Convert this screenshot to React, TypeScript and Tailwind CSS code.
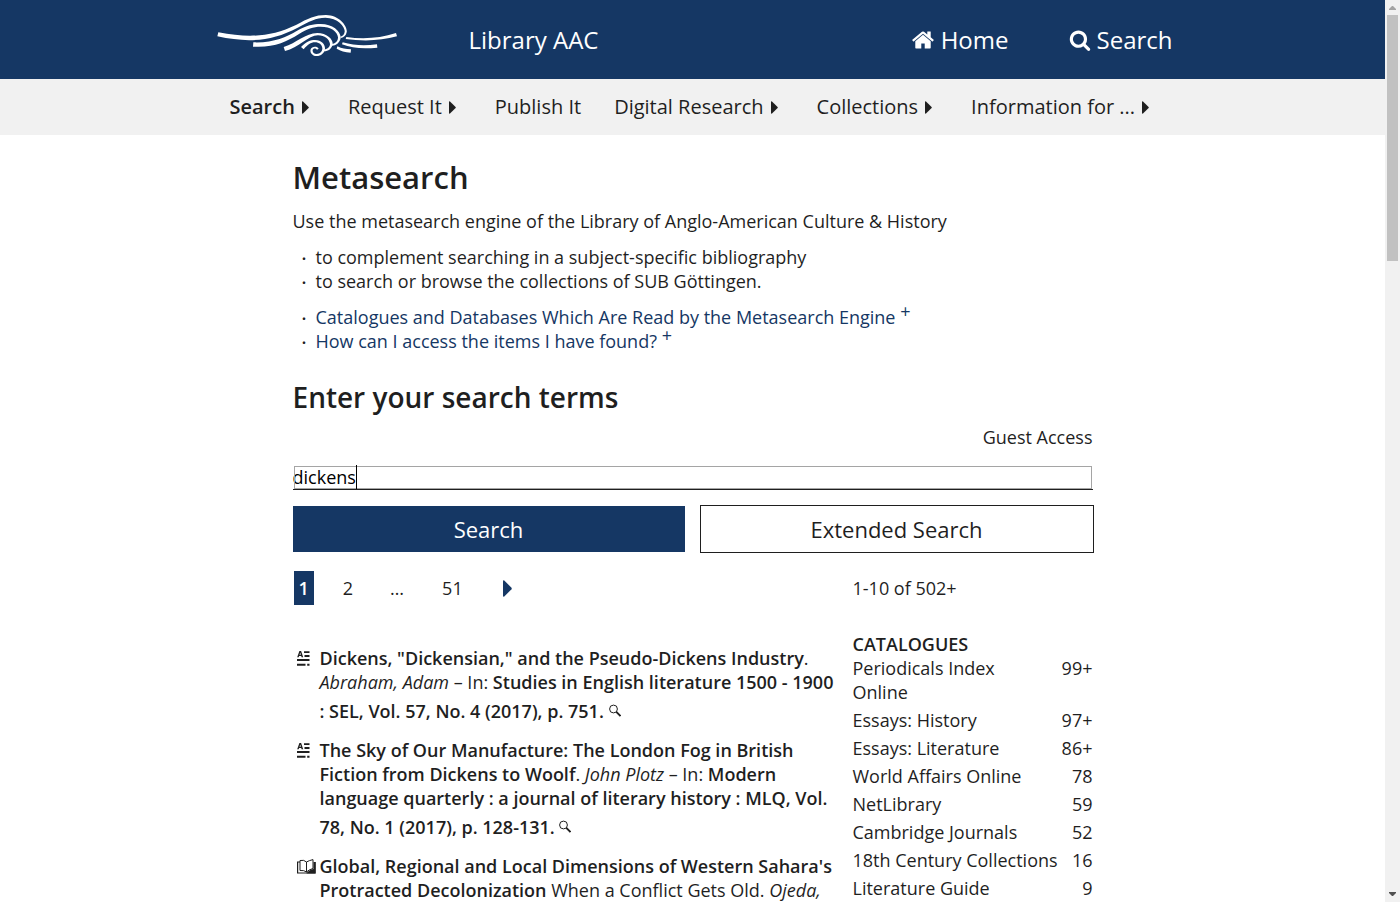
import React, { useState } from "react";

const navItems = [
  { label: "Search", menu: true, active: true },
  { label: "Request It", menu: true },
  { label: "Publish It", menu: false },
  { label: "Digital Research", menu: true },
  { label: "Collections", menu: true },
  { label: "Information for ...", menu: true },
];

const facets = [
  { name: "Periodicals Index Online", count: "99+" },
  { name: "Essays: History", count: "97+" },
  { name: "Essays: Literature", count: "86+" },
  { name: "World Affairs Online", count: "78" },
  { name: "NetLibrary", count: "59" },
  { name: "Cambridge Journals", count: "52" },
  { name: "18th Century Collections", count: "16" },
  { name: "Literature Guide", count: "9" },
];

function Logo() {
  return (
    <svg viewBox="51 46 540 123" className="h-[41px] w-[180px]" fill="#fff" aria-hidden="true">
      <path d="M55 98C150 116 215 111 288 76C325 56 345 46 378 46C420 47 444 82 440 98C438 108 432 113 423 115L421 111C429 109 433 104 434 96C436 84 415 54 376 54C347 54 329 65 293 84C215 125 145 130 52 110Z" />
      <path d="M160 128C220 130 258 113 290 94C320 77 340 73 362 73C398 73 423 95 422 115C419 130 406 139 395 138L395 133C408 132 414 123 414 113C412 95 393 81 362 81C340 81 321 88 297 103C258 127 220 145 159 141Z" />
      <path d="M251 142C290 130 316 100 352 100C380 100 399 118 398 133C396 147 385 155 372 155L372 150C384 148 390 140 390 133C388 119 374 107 354 107C325 107 295 145 255 154Z" />
      <path d="M303 142C318 126 331 121 345 121C366 121 376 136 375 148C373 161 363 169 350 169C336 169 329 157 332 149C335 140 351 138 356 147L351 150C347 144 339 146 338 151C337 158 342 163 350 163C360 163 367 156 367 146C366 135 357 128 345 128C332 128 323 135 311 149Z" />
      <path d="M439 112C490 119 540 116 588 100L591 110C542 124 488 125 437 118Z" />
      <path d="M428 128C462 138 495 139 531 134L532 144C490 148 456 146 426 134Z" />
      <path d="M412 140C426 147 437 149 453 149L452 159C434 158 422 154 410 147Z" />
    </svg>
  );
}

function HomeIcon() {
  return (
    <svg viewBox="0 0 1792 1792" className="size-6" fill="currentColor" aria-hidden="true">
      <path d="M1472 992v480q0 26-19 45t-45 19h-384v-384h-256v384h-384q-26 0-45-19t-19-45v-480q0-1 .5-3t.5-3l575-474 575 474q1 2 1 6zm223-69l-62 74q-8 9-21 11h-3q-13 0-21-7l-692-577-692 577q-12 8-24 7-13-2-21-11l-62-74q-8-10-7-23.5t11-21.5l719-599q32-26 76-26t76 26l244 204v-195q0-14 9-23t23-9h192q14 0 23 9t9 23v408l219 182q10 8 11 21.5t-7 23.5z" />
    </svg>
  );
}

function SearchIcon() {
  return (
    <svg viewBox="0 0 1792 1792" className="size-[22px]" fill="currentColor" aria-hidden="true">
      <path d="M1216 832q0-185-131.5-316.5t-316.5-131.5-316.5 131.5-131.5 316.5 131.5 316.5 316.5 131.5 316.5-131.5 131.5-316.5zm512 832q0 52-38 90t-90 38q-54 0-90-38l-343-342q-179 124-399 124-143 0-273.5-55.5t-225-150-150-225-55.5-273.5 55.5-273.5 150-225 225-150 273.5-55.5 273.5 55.5 225 150 150 225 55.5 273.5q0 220-124 399l343 343q37 37 37 90z" />
    </svg>
  );
}

function Caret({ className }: { className: string }) {
  return (
    <svg viewBox="0 0 7 13" preserveAspectRatio="none" className={className} fill="currentColor" aria-hidden="true">
      <path d="M0 1Q0 0 1 .4L6.6 6Q7 6.5 6.6 7L1 12.6Q0 13 0 12Z" />
    </svg>
  );
}

function ArticleIcon() {
  return (
    <svg viewBox="0 0 13 15" className="h-[15px] w-[13px]" fill="currentColor" aria-hidden="true">
      <path d="M2.4 0H4.1L6.2 6.3H4.6L4.2 5H2.1L1.7 6.3H.2ZM3.2 1.5 2.5 3.8H3.9Z" fillRule="evenodd" />
      <path d="M7 .2H12.5V2H7ZM7.5 4H12.5V6H7.5ZM0 8H12.5V10H0ZM0 12.8H8.5V14.8H0ZM10.2 12.8H12.5V14.8H10.2Z" />
    </svg>
  );
}

function BookIcon() {
  return (
    <svg viewBox="0 0 19 15" className="h-[15px] w-[19px]" fill="none" stroke="currentColor" aria-hidden="true">
      <path d="M3 1.5Q7 .5 9.5 3Q12 1.5 16 .6V9.5Q12 10.5 9.5 13Q7 11 3 11.5ZM9.5 3V13" />
      <path d="M3 3H.6V14H18V3" strokeWidth="1.2" />
      <path d="M16.5 3H18.6V14.5H9.5Q12 10.5 16.5 10Z" fill="currentColor" stroke="none" />
    </svg>
  );
}

function LookupLink() {
  return (
    <a href="#lookup" aria-label="Look up availability">
      <svg viewBox="0 0 12 24" className="inline-block h-6 w-3 align-baseline" fill="none" stroke="currentColor" aria-hidden="true">
        <circle cx="4.5" cy="15" r="3.9" strokeWidth="1" />
        <path d="M7.3 17.8 11.5 22" strokeWidth="1.9" />
      </svg>
    </a>
  );
}

function Result({ icon, children }: { icon: React.ReactNode; children: React.ReactNode }) {
  return (
    <li className="mb-[15px] flex">
      <span className="w-[27px] shrink-0 pt-[5px] pl-1">{icon}</span>
      <div className="min-w-0 flex-1">{children}</div>
    </li>
  );
}

function Bullets({ children }: { children: React.ReactNode }) {
  return <ul className="mb-3">{children}</ul>;
}

function Bullet({ children }: { children: React.ReactNode }) {
  return (
    <li className="flex h-6">
      <span className="w-[23px] pt-px pl-[9px] font-semibold" aria-hidden="true">·</span>
      <span>{children}</span>
    </li>
  );
}

function MoreMark() {
  return <sup className="-top-1.5 text-lg leading-none">+</sup>;
}

export default function App() {
  const [query, setQuery] = useState("dickens");
  return (
    <div className="flex h-screen overflow-hidden bg-white font-['Open_Sans',sans-serif] text-lg leading-6 text-[#1f1f1f]">
      <div className="min-w-0 flex-1 overflow-hidden">
        <header className="bg-[#153764] text-white">
          <div className="mx-auto flex h-[79px] max-w-[960px] items-center text-2xl">
            <a href="#top" aria-label="Library logo" className="mb-2 ml-1">
              <Logo />
            </a>
            <a href="#aac" className="ml-[72px]">Library AAC</a>
            <a href="#home" className="ml-auto flex items-center gap-1.5">
              <HomeIcon />
              Home
            </a>
            <a href="#search" className="ml-[60px] flex items-center gap-1.5">
              <SearchIcon />
              Search
            </a>
          </div>
        </header>

        <nav className="bg-[#f1f1f1]">
          <ul className="mx-auto flex h-14 max-w-[960px] items-center gap-[33px] pl-[17px] text-xl">
            {navItems.map((item) => (
              <li key={item.label}>
                <a href="#menu" className={item.active ? "flex items-center gap-[7px] font-semibold" : "flex items-center gap-[7px]"}>
                  {item.label}
                  {item.menu && <Caret className="mr-[6px] h-[13px] w-[7px]" />}
                </a>
              </li>
            ))}
          </ul>
        </nav>

        <main className="mx-auto max-w-[800px] pt-[22px]">
          <h1 className="mb-3 text-[31px] leading-10 font-semibold">Metasearch</h1>
          <p className="mb-3">Use the metasearch engine of the Library of Anglo-American Culture &amp; History</p>
          <Bullets>
            <Bullet>to complement searching in a subject-specific bibliography</Bullet>
            <Bullet>to search or browse the collections of SUB Göttingen.</Bullet>
          </Bullets>
          <Bullets>
            <Bullet>
              <a href="#catalogues" className="text-[#153764]">
                Catalogues and Databases Which Are Read by the Metasearch Engine <MoreMark />
              </a>
            </Bullet>
            <Bullet>
              <a href="#access" className="text-[#153764]">
                How can I access the items I have found? <MoreMark />
              </a>
            </Bullet>
          </Bullets>

          <h2 className="mt-[26px] mb-[10px] text-[28px] leading-9 font-semibold">Enter your search terms</h2>
          <p className="mb-4 text-right">Guest Access</p>

          <form onSubmit={(e) => e.preventDefault()}>
            <div className="relative mb-4">
              <input
                type="text"
                aria-label="Search terms"
                value={query}
                onChange={(e) => setQuery(e.target.value)}
                className="block h-[25px] w-full border-b border-[#1f1f1f] text-black caret-transparent outline-1 -outline-offset-2 outline-[#a5a5a5]"
              />
              <span className="absolute top-0 left-[63px] h-6 w-px bg-black" aria-hidden="true" />
            </div>
            <div className="grid grid-cols-2 gap-4 text-[22px]">
              <button type="submit" className="h-[46px] bg-[#153764] text-white">Search</button>
              <button type="button" className="h-[46px] ring-1 ring-[#1f1f1f]">Extended Search</button>
            </div>
          </form>

          <div className="mt-[19px] flex gap-4">
            <div className="min-w-0 flex-1">
              <div className="mb-[41px] flex h-[34px] items-center gap-6 pl-px">
                <a href="#p1" className="bg-[#153764] px-[5px] py-[5px] font-semibold text-white">1</a>
                <a href="#p2" className="px-[5px]">2</a>
                <span className="px-2">…</span>
                <a href="#p51" className="px-[6px]">51</a>
                <a href="#next" aria-label="Next page" className="px-[10px] text-[#153764]">
                  <Caret className="h-[17px] w-[9px]" />
                </a>
              </div>
              <ol>
                <Result icon={<ArticleIcon />}>
                  <b className="font-semibold">Dickens, "Dickensian," and the Pseudo-Dickens Industry</b>. <i>Abraham, Adam</i> – In:{" "}
                  <b className="font-semibold">Studies in English literature 1500 - 1900 : SEL, Vol. 57, No. 4 (2017), p. 751.</b> <LookupLink />
                </Result>
                <Result icon={<ArticleIcon />}>
                  <b className="font-semibold">The Sky of Our Manufacture: The London Fog in British Fiction from Dickens to Woolf</b>. <i>John Plotz</i> – In:{" "}
                  <b className="font-semibold">Modern language quarterly : a journal of literary history : MLQ, Vol. 78, No. 1 (2017), p. 128-131.</b> <LookupLink />
                </Result>
                <Result icon={<BookIcon />}>
                  <b className="font-semibold">Global, Regional and Local Dimensions of Western Sahara's Protracted Decolonization</b> When a Conflict Gets Old. <i>Ojeda,</i>
                </Result>
              </ol>
            </div>

            <aside className="w-60 shrink-0">
              <p className="mb-[27px] py-[5px]">1-10 of 502+</p>
              <h3 className="font-semibold">CATALOGUES</h3>
              <ul>
                {facets.map((f) => (
                  <li key={f.name} className="mb-1">
                    <a href="#facet" className="flex justify-between gap-2">
                      <span className="max-w-[206px]">{f.name}</span>
                      <span>{f.count}</span>
                    </a>
                  </li>
                ))}
              </ul>
            </aside>
          </div>
        </main>
      </div>

      <div className="flex w-[15px] shrink-0 flex-col items-center bg-[#f1f1f1]" aria-hidden="true">
        <svg viewBox="0 0 15 15" className="size-[15px] shrink-0" fill="#a3a3a3">
          <path d="M4 10V9L7 6H8L11 9V10Z" />
        </svg>
        <div className="h-[246px] w-[11px] bg-[#c1c1c1]" />
        <svg viewBox="0 0 15 15" className="mt-auto size-[15px] shrink-0" fill="#505050">
          <path d="M4 5V6L7 9H8L11 6V5Z" />
        </svg>
      </div>
    </div>
  );
}
